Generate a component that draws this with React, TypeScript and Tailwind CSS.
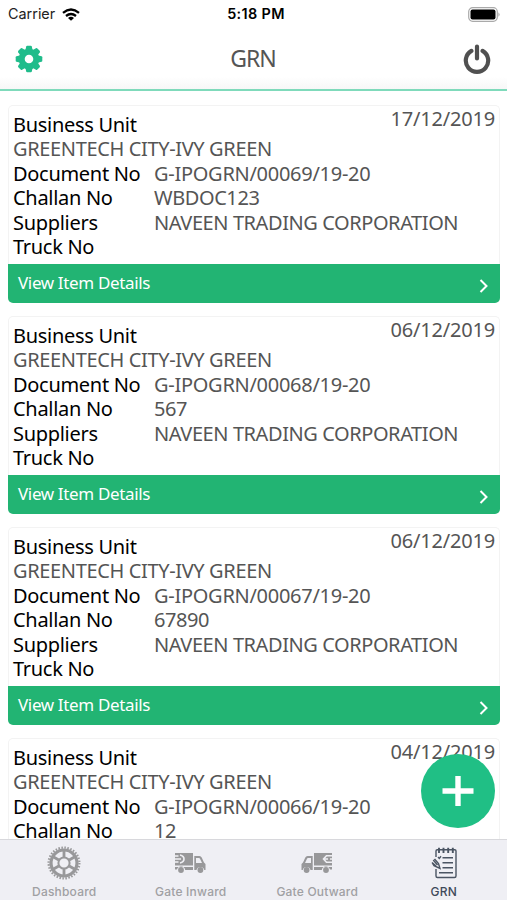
const records = [
  { date: "17/12/2019", doc: "G-IPOGRN/00069/19-20", challan: "WBDOC123" },
  { date: "06/12/2019", doc: "G-IPOGRN/00068/19-20", challan: "567" },
  { date: "06/12/2019", doc: "G-IPOGRN/00067/19-20", challan: "67890" },
  { date: "04/12/2019", doc: "G-IPOGRN/00066/19-20", challan: "12" },
];

const angles = (n: number) => Array.from({ length: n }, (_, i) => (i * 360) / n);

function SettingsIcon() {
  return (
    <svg viewBox="-14 -14 28 28" className="h-7 w-7" fill="#20bc8b">
      <circle r="7.3" fill="none" stroke="#20bc8b" strokeWidth="6" />
      {angles(8).map((a) => (
        <path key={a} d="M-3.7-8.5L-2.8-12.5Q-2.6-13.3-1.8-13.3H1.8Q2.6-13.3 2.8-12.5L3.7-8.5Z" transform={`rotate(${a})`} />
      ))}
    </svg>
  );
}

function PowerIcon() {
  return (
    <svg viewBox="0 0 28 30" className="h-[30px] w-7" fill="none" stroke="#505050" strokeWidth="4.2" strokeLinecap="round">
      <path d="M14 2.5V14.5M8.4 6.9A11.2 11.2 0 1 0 19.6 6.9" />
    </svg>
  );
}

function SprocketIcon() {
  return (
    <svg viewBox="-17 -17 34 34" className="h-[34px] w-[34px]" fill="none" stroke="#98989a">
      <circle r="13" strokeWidth="3.2" />
      <circle r="15.4" strokeWidth="2.2" strokeDasharray="1.51 1.51" />
      <circle r="5.6" strokeWidth="2" />
      {angles(6).map((a) => (
        <path key={a} d="M0-6V-13" strokeWidth="2.8" transform={`rotate(${a})`} />
      ))}
    </svg>
  );
}

function TruckIcon({ outward = false }: { outward?: boolean }) {
  return (
    <svg viewBox="0 0 32 22" className="mr-px h-[22px] w-8" fill="#98989a">
      <g transform={outward ? "translate(32 0) scale(-1 1)" : undefined}>
        <path d="M1 1H19V13.5H1Z" />
        <path d="M1 15H19V18H11.2A4.2 4.2 0 0 0 3 17.5H1Z" />
        <path
          fillRule="evenodd"
          d="M20.3 4H25.5Q27 4 27.7 5.5L30 10.5L31.5 12V18H30.3A4 4 0 0 0 22.5 18H20.3ZM22 6V11H28L26 6.7Q25.7 6 25 6Z"
        />
        <circle cx="7" cy="18" r="2.9" />
        <circle cx="26.4" cy="18" r="2.9" />
        {outward ? (
          <path d="M0 3.7H5M5 7H10M0 10.3H5M4.5 3.7H6.5L9.5 7L6.5 10.3H4.5M0 7H3" fill="none" stroke="#efeff4" strokeWidth="1.6" />
        ) : (
          <path d="M0 4H4.5M0 7H7M0 10H4.5M6 3Q10 4 10 7T6 11" fill="none" stroke="#efeff4" strokeWidth="1.6" />
        )}
      </g>
    </svg>
  );
}

function NotepadIcon() {
  return (
    <svg viewBox="0 0 28 32" className="h-8 w-7" fill="none" stroke="#4b5563" strokeWidth="1.4">
      <path d="M6 10V4Q6 2.7 7.3 2.7H24.7Q26 2.7 26 4V29Q26 30.5 24.5 30.5H7.5Q6 30.5 6 29V22" />
      <path d="M9 .8V6M13.5 .8V6M18.2 .8V6M22.8 .8V6" strokeWidth="1.9" />
      <path d="M12.5 10.7H23M12.5 15.7H23M12.5 20.7H23M9 25.7H23" />
      <path d="M8 10L9.3 11.5L11 9.3" />
      <path d="M2 15.5L4 18.7L10 21.5L8.5 16.5L5 12.5L3.7 13.5L7.5 18M2 15.5L6 19" />
    </svg>
  );
}

function Row({ label, value }: { label: string; value?: string }) {
  return (
    <div className="flex">
      <span className="w-[141px] shrink-0 tracking-[-0.3px] text-black">{label}</span>
      <span className={value?.startsWith("G-") ? "tracking-[-0.28px]" : "tracking-[-0.42px]"}>{value}</span>
    </div>
  );
}

function GrnCard({ date, doc, challan }: (typeof records)[number]) {
  return (
    <article className="relative shrink-0">
      <time className="absolute top-px right-[5px] leading-[26px] tracking-[-0.18px]">{date}</time>
      <div className="h-[159px] rounded-t-[5px] border border-b-0 border-[#f3f3f3] pt-[7px] pl-1">
        <Row label="Business Unit" />
        <p className="tracking-[-0.36px]">GREENTECH CITY-IVY GREEN</p>
        <Row label="Document No" value={doc} />
        <Row label="Challan No" value={challan} />
        <Row label="Suppliers" value="NAVEEN TRADING CORPORATION" />
        <Row label="Truck No" />
      </div>
      <button className="flex h-[39px] w-full items-center justify-between rounded-b-[5px] bg-[#22b473] pr-[11px] pl-[10px] text-[17px] text-white">
        <span className="tracking-[-0.35px]">View Item Details</span>
        <svg viewBox="0 0 10 16" className="mt-1 h-4 w-[10px]" fill="none" stroke="white" strokeWidth="2">
          <path d="M1.5 2L7.5 8L1.5 14" />
        </svg>
      </button>
    </article>
  );
}

const tabs = [
  { label: "Dashboard", icon: <SprocketIcon /> },
  { label: "Gate Inward", icon: <TruckIcon /> },
  { label: "Gate Outward", icon: <TruckIcon outward /> },
  { label: "GRN", icon: <NotepadIcon />, active: true },
];

export default function App() {
  return (
    <div className="relative flex h-[900px] w-[507px] flex-col overflow-hidden bg-white font-['Noto_Sans',sans-serif] text-[20px] leading-[24.4px] text-[#555]">
      <div className="grid h-7 shrink-0 grid-cols-[1fr_auto_1fr] items-center pr-[7px] pl-2 font-['Inter',sans-serif] text-[14.4px] leading-none text-[#222]">
        <div className="flex items-center gap-[7px]">
          <span>Carrier</span>
          <svg viewBox="0 0 18 13" className="h-[13px] w-[18px]" fill="none" stroke="black" strokeWidth="2.3">
            <path d="M1 4.8Q9-1.8 17 4.8M4 8Q9 4 14 8" />
            <path d="M9 12.7L6 9.9Q9 7.7 12 9.9Z" fill="black" stroke="none" />
          </svg>
        </div>
        <span className="pl-1 text-center font-semibold tracking-[0.35px] text-black">5:18 PM</span>
        <svg viewBox="0 0 32 15" className="h-[15px] w-8 justify-self-end">
          <rect x=".7" y=".7" width="28.6" height="13.6" rx="4" fill="none" stroke="#aaa" strokeWidth="1.2" />
          <rect x="2.5" y="2.5" width="25" height="10" rx="2" />
          <path d="M30.5 5.2Q32.5 7.5 30.5 9.8Z" fill="#999" />
        </svg>
      </div>
      <header className="flex h-[63px] shrink-0 items-center justify-between border-b-2 border-[#7fdabb] bg-linear-to-b from-white from-80% to-[#f7f7f7] pr-4 pl-[15px]">
        <SettingsIcon />
        <h1 className="mb-0.5 text-[23px] leading-8 tracking-[-1px]">GRN</h1>
        <PowerIcon />
      </header>
      <main className="flex min-h-0 flex-1 flex-col gap-[13px] overflow-hidden pt-[14px] pr-[7px] pl-2">
        {records.map((r) => (
          <GrnCard key={r.doc} {...r} />
        ))}
      </main>
      <button aria-label="Add" className="absolute right-3 bottom-[72px] flex h-[74px] w-[74px] items-center justify-center rounded-full bg-[#20bf85]">
        <svg viewBox="0 0 32 32" className="h-8 w-8" stroke="white" strokeWidth="5.4">
          <path d="M16 1V31M.5 16H31.5" />
        </svg>
      </button>
      <nav className="grid h-[61px] shrink-0 grid-cols-4 border-t border-[#d8d8dc] bg-[#efeff4] pl-px font-['Inter',sans-serif] text-[12px] leading-[14px] font-medium tracking-[0.2px]">
        {tabs.map((t) => (
          <div key={t.label} className={`flex flex-col items-center ${t.active ? "text-[#3f4a5a]" : "text-[#a0a0a3]"}`}>
            <div className="flex h-[45px] items-center">{t.icon}</div>
            <span>{t.label}</span>
          </div>
        ))}
      </nav>
    </div>
  );
}
